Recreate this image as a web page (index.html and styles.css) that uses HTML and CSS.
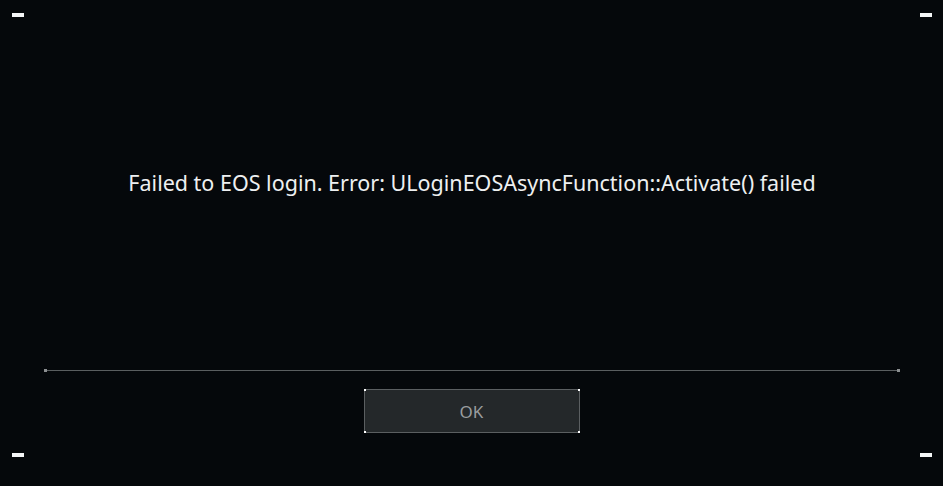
FILE: index.html
```html
<!DOCTYPE html>
<html>
<head>
<meta charset="utf-8">
<link rel="stylesheet" href="styles.css">
</head>
<body>
<div class="screen">
  <span class="corner tl"></span>
  <span class="corner tr"></span>
  <span class="corner bl"></span>
  <span class="corner br"></span>
  <div class="message">Failed to EOS login. Error: ULoginEOSAsyncFunction::Activate() failed</div>
  <div class="divider"><span class="cap"></span><span class="rule"></span><span class="cap"></span></div>
  <div class="actions">
    <button class="btn">OK<span class="dot d1"></span><span class="dot d2"></span><span class="dot d3"></span><span class="dot d4"></span></button>
  </div>
</div>
</body>
</html>
```
FILE: styles.css
```css
html, body {
  margin: 0;
  padding: 0;
  background: #05080b;
}
.screen {
  position: relative;
  width: 943px;
  height: 486px;
  box-sizing: border-box;
  padding: 0 43px 0 44px;
  display: flex;
  flex-direction: column;
  font-family: "Noto Sans", "Open Sans", sans-serif;
}
.corner {
  position: absolute;
  width: 12px;
  height: 4px;
  background: #f4f6f7;
}
.tl { left: 12px; top: 13px; }
.tr { left: 920px; top: 13px; }
.bl { left: 12px; top: 453px; }
.br { left: 920px; top: 453px; }
.message {
  margin-top: 168px;
  height: 30px;
  line-height: 30px;
  text-align: center;
  color: #eef0f1;
  font-size: 21.5px;
}
.divider {
  margin-top: 171px;
  display: flex;
  align-items: center;
  height: 3px;
}
.cap {
  width: 3px;
  height: 3px;
  background: #8c8f91;
}
.rule {
  flex: 1;
  height: 1px;
  background: #5a5e60;
}
.actions {
  margin-top: 17px;
  display: flex;
  justify-content: center;
  padding-right: 1px;
}
.btn {
  position: relative;
  width: 216px;
  height: 44px;
  box-sizing: border-box;
  background: #24282a;
  border: 1px solid #5b5f61;
  color: #9a9d9f;
  font-family: "Noto Sans", "Open Sans", sans-serif;
  font-size: 17px;
  padding: 0;
}
.dot {
  position: absolute;
  width: 2px;
  height: 2px;
  background: #ffffff;
}
.d1 { left: -1px; top: -1px; }
.d2 { right: -1px; top: -1px; }
.d3 { left: -1px; bottom: -1px; }
.d4 { right: -1px; bottom: -1px; }
```
